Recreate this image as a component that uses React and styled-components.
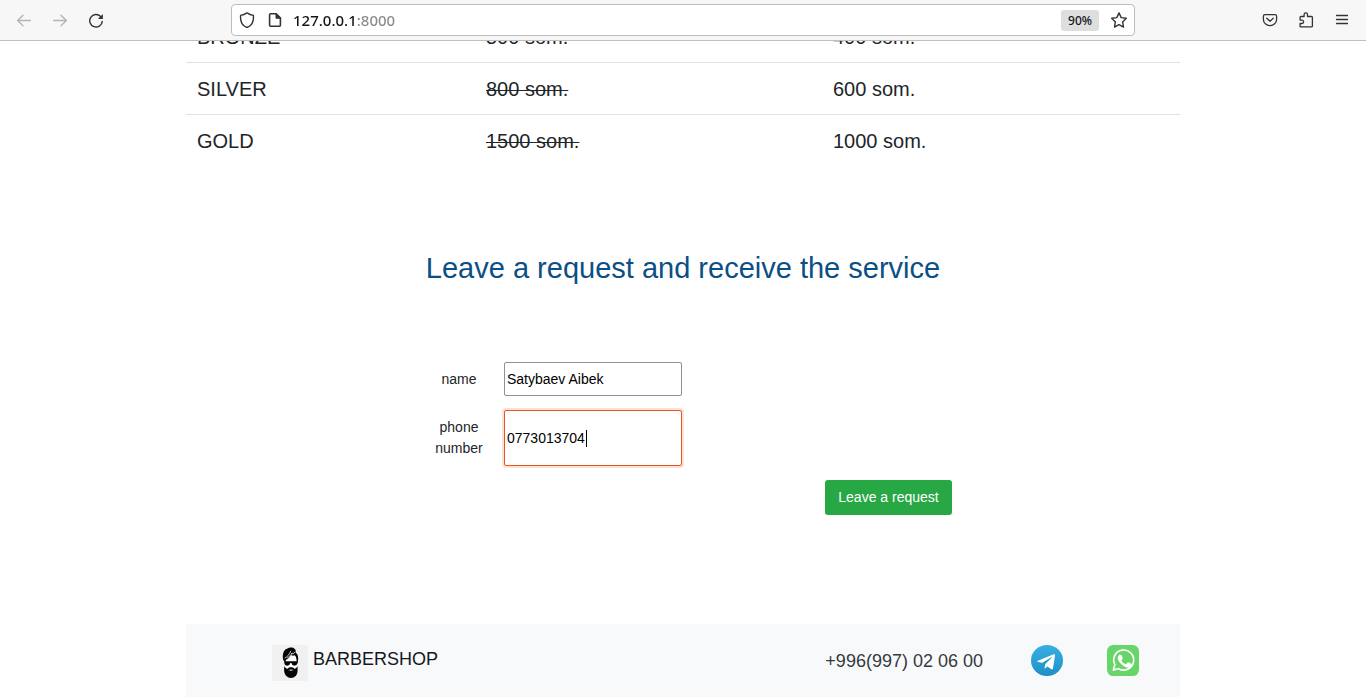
import React from "react";
import styled, { createGlobalStyle } from "styled-components";

const GlobalStyle = createGlobalStyle`
  *, *::before, *::after { box-sizing: border-box; }
  html, body { margin: 0; padding: 0; }
  body {
    background: #fff;
    color: #212529;
    font: 14px/21px "Liberation Sans", Arial, sans-serif;
  }
`;

/* ---------- browser bar ---------- */

const Toolbar = styled.header`
  display: flex;
  align-items: center;
  justify-content: space-between;
  gap: 16px;
  padding: 4px 8px;
  background: #f7f7f7;
  border-bottom: 1px solid #bfbfbf;
`;

const ButtonGroup = styled.nav`
  display: flex;
  gap: 4px;
`;

const IconButton = styled.button`
  display: flex;
  align-items: center;
  justify-content: center;
  flex: none;
  width: ${(p) => p.$width || 32}px;
  height: 32px;
  padding: 0;
  border: 0;
  background: none;
  color: ${(p) => (p.$dim ? "#b3b3b3" : "#333338")};
`;

const AddressBar = styled.div`
  display: flex;
  align-items: center;
  flex: 0 1 904px;
  min-width: 0;
  height: 32px;
  padding: 0 1px;
  background: #fff;
  border: 1px solid #bdbdbd;
  border-radius: 4px;
`;

const AddressInput = styled.input`
  flex: 1;
  min-width: 0;
  height: 24px;
  margin-left: 4px;
  padding: 0;
  border: 0;
  outline: 0;
  font: 500 15px/24px "Noto Sans", "Open Sans", sans-serif;
  color: #15141a;
  background: linear-gradient(to right, #15141a 63px, #8a8a8e 63px);
  -webkit-background-clip: text;
  background-clip: text;
  -webkit-text-fill-color: transparent;
`;

const ZoomBadge = styled.button`
  flex: none;
  width: 38px;
  height: 21px;
  margin-right: 6px;
  padding: 0;
  border: 0;
  border-radius: 3px;
  background: #dedede;
  color: #15141a;
  font: 500 12px/21px "Noto Sans", "Open Sans", sans-serif;
`;

/* ---------- page ---------- */

const Page = styled.main`
  overflow: hidden;
`;

const Container = styled.div`
  width: 100%;
  max-width: 994px;
  margin: 0 auto;
`;

const PriceTable = styled.table`
  width: 100%;
  margin-top: -31px;
  table-layout: fixed;
  border-collapse: separate;
  border-spacing: 0;
  font-size: 20px;
  line-height: 29px;
`;

const Cell = styled.td`
  width: ${(p) => p.$width || "auto"};
  padding: 12px 11px 10px;
  border-top: 1px solid #dee2e6;
  text-align: left;
  font-weight: 400;
`;

const OldPrice = styled.s`
  text-decoration-thickness: 1px;
`;

const Title = styled.h1`
  margin: 84px 0 0;
  text-align: center;
  color: #0b4f85;
  font-size: 29px;
  font-weight: 400;
  line-height: 36px;
`;

const RequestForm = styled.form`
  display: grid;
  grid-template-columns: 90px 178px 1fr;
  row-gap: 14px;
  max-width: 538px;
  margin: 76px auto 0;
`;

const Label = styled.label`
  grid-column: 1;
  align-self: center;
  padding: 0 16px;
  text-align: center;
`;

const Field = styled.div`
  position: relative;
  display: grid;
  height: ${(p) => p.$height}px;
`;

const TextInput = styled.input`
  width: 100%;
  padding: 0 2px;
  border: 1px solid ${(p) => (p.$active ? "#e95420" : "#8f8f9d")};
  border-radius: 2px;
  outline: 0;
  box-shadow: ${(p) => (p.$active ? "0 0 0 2px #fde0d6" : "none")};
  background: #fff;
  color: #000;
  font: inherit;
  caret-color: transparent;
`;

const Caret = styled.span`
  position: absolute;
  top: 20px;
  left: 82px;
  width: 1px;
  height: 17px;
  background: #000;
`;

const SubmitButton = styled.button`
  grid-column: 3;
  grid-row: 3;
  justify-self: end;
  width: 127px;
  height: 35px;
  padding: 0;
  border: 0;
  border-radius: 3px;
  background: #28a745;
  color: #fff;
  font: inherit;
`;

const Footer = styled.footer`
  display: flex;
  align-items: flex-start;
  margin-top: 109px;
  padding: 21px 41px 16px 86px;
  background: #f8f9fb;
  font-size: 18px;
`;

const Brand = styled.a`
  display: flex;
  gap: 5px;
  margin-right: auto;
  color: #16181b;
  line-height: 28px;
  text-decoration: none;
`;

const Phone = styled.span`
  margin-right: 48px;
  color: #343a40;
  line-height: 32px;
`;

const Socials = styled.div`
  display: flex;
  gap: 44px;
`;

const SocialLink = styled.a`
  display: flex;
`;

/* ---------- drawings ---------- */

const Icon = ({ children, size = 16, stroke = 1.3 }) => (
  <svg width={size} height={size} viewBox="0 0 16 16" fill="none" stroke="currentColor"
    strokeWidth={stroke} strokeLinecap="round" strokeLinejoin="round" aria-hidden="true">
    {children}
  </svg>
);

const BackIcon = () => <Icon><path d="M14.4 8.5H1.6M7 3.2 1.6 8.5 7 13.8" /></Icon>;
const ForwardIcon = () => <Icon><path d="M1.6 8.5h12.8M9 3.2l5.4 5.3L9 13.8" /></Icon>;
const ReloadIcon = () => (
  <Icon stroke={1.4}>
    <path d="M14.3 9.400A6.300 6.300 0 1 1 12.600 4.400" />
    <path d="M14.900 2v5H9.900z" fill="currentColor" stroke="none" />
  </Icon>
);
const ShieldIcon = () => (
  <Icon stroke={1.4}>
    <path d="M8 .9c2 1.300 4 2.100 6.400 2.500.4 4.800-.8 9.300-5.300 11.600q-1.100.5-2.200 0C2.400 12.700 1.200 8.200 1.600 3.400 4 3 6 2.200 8 .9z" />
  </Icon>
);
const FileIcon = () => (
  <Icon stroke={1.6}>
    <path d="M3.600 1.800h5.600l4.200 4.200v7.200a1 1 0 0 1-1 1H3.600a1 1 0 0 1-1-1V2.800a1 1 0 0 1 1-1z" />
    <path d="M9 1.800V6.200h4.400z" fill="currentColor" strokeWidth="1" />
  </Icon>
);
const StarIcon = () => (
  <Icon stroke={1.4}>
    <path d="M8 .9l2.200 4.700 5.100.7-3.700 3.600.9 5.200L8 12.600l-4.500 2.500.9-5.200L.7 6.300l5.100-.7z" />
  </Icon>
);
const PocketIcon = () => (
  <Icon stroke={1.3}>
    <path d="M3 2.600h10a1.600 1.600 0 0 1 1.600 1.600V7.500a6.600 6.100 0 0 1-13.200 0V4.200A1.600 1.600 0 0 1 3 2.600z" />
    <path d="M4.800 6.300 8 9.300l3.200-3" />
  </Icon>
);
const PuzzleIcon = () => (
  <Icon stroke={1.3}>
    <path d="M2.100 14.600V11.500h1.800a1.700 1.700 0 0 0 0-3.400H2.100V5.400a.9.900 0 0 1 .9-.9h3.100V2.500a1.700 1.700 0 0 1 3.400 0v2h4a.9.900 0 0 1 .9.900v8.600a.9.900 0 0 1-.9.900H2.700z" />
  </Icon>
);
const MenuIcon = () => <Icon stroke={1.3}><path d="M2.500 3.500h11M2.500 7.500h11M2.500 11.500h11" /></Icon>;

const BarberLogo = () => (
  <svg width="36" height="36" viewBox="0 0 108 108" role="img" aria-label="Bearded man">
    <path fill="#f0f0f0" d="M0 0h108v108H0z" />
    <path fill="#fff" d="M38 44q10-2 18-20l18 10 3 24-3 22H38z" />
    <path fill="#050505" d="M34 46C30 31 34 14 45 11c8-5 19-4 23 1 4 2 3 7 3 11 8 5 9 16 6 30l-3-3c0-8-2-16-6-19-4 2-8 1-11-1-4 8-9 12-15 14l-2 8z" />
    <path fill="none" stroke="#f0f0f0" strokeWidth="2.500" strokeLinecap="round" d="M39 39c8-4 13-11 17-20M47 38c6-3 10-8 13-14M60 27q6 1 8-5" />
    <path fill="#050505" d="M36 49h41v5q-2 8-10 8-7 0-9-8h-3q-2 8-9 8-8 0-9-8z" />
    <path fill="#050505" d="M37 63q5 10 10 8 4-5 10-4 6-1 10 4 6 1 9-8 3 20-4 29-7 7-15 7t-15-7q-8-9-5-29z" />
    <path fill="#f0f0f0" d="M48 77q9-7 18 0-3-2-6-1l-3 2-3-2q-3-1-6 1z" />
  </svg>
);

const TelegramLogo = () => (
  <svg width="32" height="31" viewBox="0 0 96 93" role="img" aria-label="Telegram">
    <defs>
      <linearGradient id="telegram" x1="0" y1="0" x2="0" y2="1">
        <stop offset="0" stopColor="#38aee4" />
        <stop offset="1" stopColor="#1d91c5" />
      </linearGradient>
    </defs>
    <ellipse cx="48" cy="46.500" rx="48" ry="46.500" fill="url(#telegram)" />
    <path fill="#fff" d="M19 48 68 28q5-2 4 4l-6 38q-1 5-6 2L43 60 33 53l-13-3q-3-1-1-2z" />
    <path fill="#2499cd" d="M33 54 62 36q3-1 1 1L43 57l-2 12q-2-1-3-3z" />
    <path fill="#fff" d="m43 58 7 6-9 7q-1-1 0-4z" />
  </svg>
);

const WhatsAppLogo = () => (
  <svg width="32" height="31" viewBox="0 0 96 93" role="img" aria-label="WhatsApp">
    <rect width="96" height="93" rx="19" fill="#67d568" />
    <path fill="none" stroke="#fff" strokeWidth="5" strokeLinejoin="round" d="M19 75l4.500-16A30 30 0 1 1 35 71z" />
    <path fill="#fff" d="M37 29h4q2 0 3 2l3 8q1 2-1 4l-3 4q5 8 14 11l4-5q2-2 4-1l8 4q2 1 1 3-1 9-11 9-11-1-20-10Q33 49 32 40q0-7 5-11z" />
  </svg>
);

const plans = [
  { name: "BRONZE", old: "500 som.", price: "400 som." },
  { name: "SILVER", old: "800 som.", price: "600 som." },
  { name: "GOLD", old: "1500 som.", price: "1000 som." },
];

export default function App() {
  return (
    <>
      <GlobalStyle />
      <Toolbar>
        <ButtonGroup aria-label="Navigation">
          <IconButton $dim aria-label="Back"><BackIcon /></IconButton>
          <IconButton $dim aria-label="Forward"><ForwardIcon /></IconButton>
          <IconButton aria-label="Reload"><ReloadIcon /></IconButton>
        </ButtonGroup>
        <AddressBar>
          <IconButton $width={28} aria-label="Tracking protection"><ShieldIcon /></IconButton>
          <IconButton $width={28} aria-label="Site information"><FileIcon /></IconButton>
          <AddressInput aria-label="Address" defaultValue="127.0.0.1:8000" />
          <ZoomBadge>90%</ZoomBadge>
          <IconButton $width={28} aria-label="Bookmark"><StarIcon /></IconButton>
        </AddressBar>
        <ButtonGroup aria-label="Tools">
          <IconButton aria-label="Pocket"><PocketIcon /></IconButton>
          <IconButton aria-label="Extensions"><PuzzleIcon /></IconButton>
          <IconButton aria-label="Menu"><MenuIcon /></IconButton>
        </ButtonGroup>
      </Toolbar>
      <Page>
        <Container>
          <PriceTable>
            <tbody>
              {plans.map((plan) => (
                <tr key={plan.name}>
                  <Cell as="th" scope="row" $width="289px">{plan.name}</Cell>
                  <Cell $width="347px"><OldPrice>{plan.old}</OldPrice></Cell>
                  <Cell>{plan.price}</Cell>
                </tr>
              ))}
            </tbody>
          </PriceTable>
          <Title>Leave a request and receive the service</Title>
          <RequestForm onSubmit={(e) => e.preventDefault()}>
            <Label htmlFor="name">name</Label>
            <Field $height={34}>
              <TextInput id="name" type="text" defaultValue="Satybaev Aibek" />
            </Field>
            <Label htmlFor="phone">phone number</Label>
            <Field $height={56}>
              <TextInput id="phone" type="tel" defaultValue="0773013704" $active />
              <Caret />
            </Field>
            <SubmitButton type="submit">Leave a request</SubmitButton>
          </RequestForm>
          <Footer>
            <Brand href="#">
              <BarberLogo />
              BARBERSHOP
            </Brand>
            <Phone>+996(997) 02 06 00</Phone>
            <Socials>
              <SocialLink href="#"><TelegramLogo /></SocialLink>
              <SocialLink href="#"><WhatsAppLogo /></SocialLink>
            </Socials>
          </Footer>
        </Container>
      </Page>
    </>
  );
}
